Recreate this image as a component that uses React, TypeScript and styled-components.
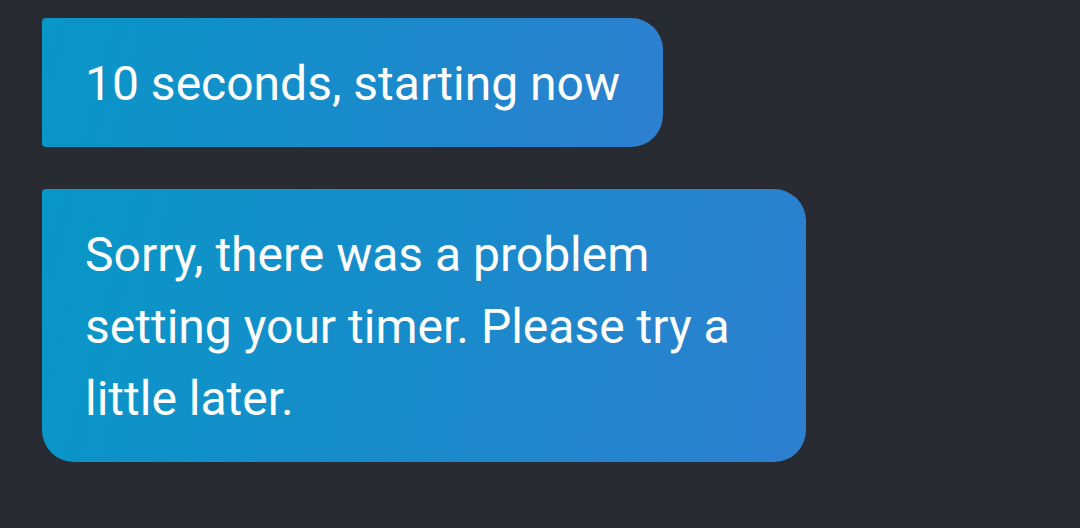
import styled, { createGlobalStyle } from "styled-components"

const GlobalStyle = createGlobalStyle`
  html, body {
    margin: 0;
    padding: 0;
    background-color: #282b32;
  }
`

const messages = [
  { text: "10 seconds, starting now" },
  { text: "Sorry, there was a problem setting your timer. Please try a little later." },
]

function App() {
  return (
    <>
      <GlobalStyle />
      <Thread>
        {messages.map((m, i) => (
          <Bubble key={i} $last={i === messages.length - 1}>
            {m.text}
          </Bubble>
        ))}
      </Thread>
    </>
  )
}

const Thread = styled.div`
  width: 1080px;
  height: 528px;
  box-sizing: border-box;
  padding: 18px 0 0 42px;
  display: flex;
  flex-direction: column;
  align-items: flex-start;
  gap: 42px;
  background-color: #282b32;
`

const Bubble = styled.div<{ $last: boolean }>`
  max-width: 764px;
  box-sizing: border-box;
  padding: 30px 43px 27px 43px;
  border-radius: 4px 32px 32px ${(p) => (p.$last ? "32px" : "4px")};
  background: linear-gradient(105deg, #0897c7 0%, #1a8acb 55%, #2e7fd0 100%);
  font-family: Roboto, "Noto Sans", sans-serif;
  font-size: 48px;
  font-weight: 400;
  line-height: 72px;
  color: #ffffff;
`

export default App
